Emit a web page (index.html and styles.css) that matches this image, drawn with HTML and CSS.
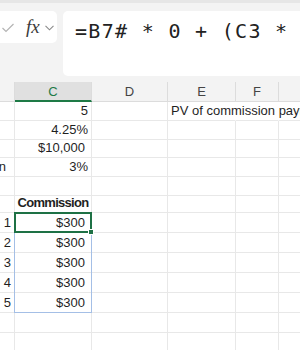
FILE: index.html
```html
<!DOCTYPE html>
<html lang="en">
<head>
    <meta charset="UTF-8">
    <meta name="viewport" content="width=device-width, initial-scale=1.0">
    <title>Commission</title>
    <link rel="stylesheet" href="styles.css">
</head>
<body>
    <div class="toolbar">
        <div class="namebox">
            <svg class="check" width="12" height="10" viewBox="0 0 12 10"><polyline points="0.5,5 4,8.5 11.5,1" fill="none" stroke="#b4b4b4" stroke-width="1.2"/></svg>
            <span class="fx">fx</span>
            <svg class="chev" width="9" height="6" viewBox="0 0 9 6"><polyline points="0.5,0.8 4.5,4.8 8.5,0.8" fill="none" stroke="#8a8a8a" stroke-width="1.1"/></svg>
        </div>
        <div class="formula">=B7# * 0 + (C3 *</div>
    </div>

    <div class="sheet">
        <div class="hd"></div><div class="hd sel">C</div><div class="hd">D</div><div class="hd">E</div><div class="hd">F</div><div class="hd"></div>

        <div class="c"></div><div class="c num">5</div><div class="c"></div><div class="c spill">PV of commission paym</div><div class="c nogrid"></div><div class="c nogrid"></div>
        <div class="c"></div><div class="c num">4.25%</div><div class="c"></div><div class="c"></div><div class="c"></div><div class="c"></div>
        <div class="c"></div><div class="c num acct">$10,000</div><div class="c"></div><div class="c"></div><div class="c"></div><div class="c"></div>
        <div class="c num lbl">n</div><div class="c num">3%</div><div class="c"></div><div class="c"></div><div class="c"></div><div class="c"></div>
        <div class="c"></div><div class="c"></div><div class="c"></div><div class="c"></div><div class="c"></div><div class="c"></div>
        <div class="c"></div><div class="c ctr">Commission</div><div class="c"></div><div class="c"></div><div class="c"></div><div class="c"></div>
        <div class="c num">1</div><div class="c num acct">$300</div><div class="c"></div><div class="c"></div><div class="c"></div><div class="c"></div>
        <div class="c num">2</div><div class="c num acct">$300</div><div class="c"></div><div class="c"></div><div class="c"></div><div class="c"></div>
        <div class="c num">3</div><div class="c num acct">$300</div><div class="c"></div><div class="c"></div><div class="c"></div><div class="c"></div>
        <div class="c num">4</div><div class="c num acct">$300</div><div class="c"></div><div class="c"></div><div class="c"></div><div class="c"></div>
        <div class="c num">5</div><div class="c num acct">$300</div><div class="c"></div><div class="c"></div><div class="c"></div><div class="c"></div>
        <div class="c"></div><div class="c"></div><div class="c"></div><div class="c"></div><div class="c"></div><div class="c"></div>
        <div class="c"></div><div class="c"></div><div class="c"></div><div class="c"></div><div class="c"></div><div class="c"></div>

        <div class="range"></div>
        <div class="active"><span class="handle"></span></div>
    </div>
</body>
</html>
```

FILE: styles.css
```css
* { box-sizing: border-box; }
body { margin: 0; width: 300px; height: 350px; overflow: hidden; background: #f3f3f3; font-family: "Liberation Sans", Arial, sans-serif; }

.toolbar { display: flex; align-items: flex-start; gap: 6px; height: 82px; border-top: 3px solid #e6e6e6; padding-top: 8px; }
.namebox { flex: none; margin-left: -10px; width: 67px; height: 32px; background: #fff; border-radius: 5px; display: flex; align-items: center; padding-left: 12px; }
.check { margin-top: 1px; }
.fx { margin-left: 12px; font-family: "Liberation Serif", serif; font-style: italic; font-size: 19px; color: #3c3c3c; }
.chev { margin-left: 5px; margin-top: 1px; }
.formula { flex: none; width: 260px; height: 65px; background: #fff; border-radius: 5px; padding: 8px 0 0 12px; font-family: "DejaVu Sans Mono", monospace; font-size: 20px; letter-spacing: 1.3px; color: #222; white-space: nowrap; }

.sheet { position: relative; display: grid; grid-template-columns: 15px 77px 76px 68px 43px 60px; grid-template-rows: 20px 19px 19px 18px 19px 19px 17px 20px 20px 20px 20px 20px 20px 20px; background: #fff; }
.hd { display: flex; align-items: center; justify-content: center; background: #f3f3f3; border-right: 1px solid #dcdcdc; border-bottom: 1px solid #dcdcdc; font-size: 13px; color: #444; }
.hd.sel { background: #e0e0e0; color: #1e7a46; border-bottom: 2px solid #1e7a46; }

.c { display: flex; align-items: flex-end; padding: 0 3px 2px; border-right: 1px solid #e8e8e8; border-bottom: 1px solid #e8e8e8; font-size: 13px; line-height: 15px; color: #1f1f1f; white-space: nowrap; }
.num { justify-content: flex-end; }
.acct { padding-right: 6px; }
.lbl { padding-right: 8px; }
.ctr { justify-content: center; font-weight: bold; letter-spacing: -0.7px; }
.spill { border-right-color: transparent; overflow: visible; }
.nogrid { border-right-color: transparent; }

.range { position: absolute; grid-column: 2 / 3; grid-row: 8 / 13; top: -1px; left: -1px; right: 0; bottom: 0; border: 1px solid #a4bfe6; }
.active { position: absolute; grid-column: 2 / 3; grid-row: 8 / 9; top: -1px; left: -1px; right: 0; bottom: 0; border: 2px solid #1e7145; }
.handle { position: absolute; right: -4px; bottom: -4px; width: 6px; height: 6px; background: #1e7145; border: 1px solid #fff; }
```
